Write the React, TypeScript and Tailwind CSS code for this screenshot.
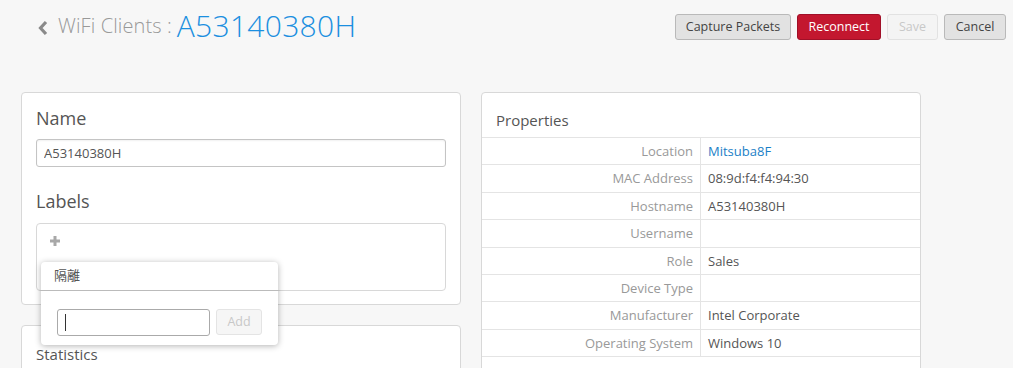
import { useState } from 'react'

const rows: { label: string; value: string; link?: boolean }[] = [
  { label: 'Location', value: 'Mitsuba8F', link: true },
  { label: 'MAC Address', value: '08:9d:f4:f4:94:30' },
  { label: 'Hostname', value: 'A53140380H' },
  { label: 'Username', value: '' },
  { label: 'Role', value: 'Sales' },
  { label: 'Device Type', value: '' },
  { label: 'Manufacturer', value: 'Intel Corporate' },
  { label: 'Operating System', value: 'Windows 10' },
]

const App = () => {
  const [name, setName] = useState('A53140380H')
  const [label, setLabel] = useState('')

  return (
    <div
      className="bg-[#f7f7f7] text-[#555] overflow-hidden h-[368px]"
      style={{ fontFamily: '"Open Sans", "Noto Sans CJK JP", sans-serif' }}
    >
      {/* header */}
      <div className="flex items-start justify-between pl-[37px] pr-[7px] pt-[8px] h-[92px]">
        <div className="flex items-center h-[36px]">
          <svg width="12" height="16" viewBox="0 0 12 16" className="mr-[9px] mt-[3px]">
            <path d="M9 2 L3.5 8 L9 14" fill="none" stroke="#8a8a8a" strokeWidth="3.2" />
          </svg>
          <span className="text-[20px] font-light text-[#999] tracking-[0.1px]">WiFi Clients :</span>
          <span className="text-[30px] font-light text-[#1b8fe0] ml-[5px] leading-none tracking-[0.3px]">A53140380H</span>
        </div>
        <div className="flex gap-[6px] mt-[6px]">
          <button className="h-[26px] w-[116px] text-[12.5px] rounded-[3px] border border-[#b9b9b9] bg-[#e2e2e2] text-[#444]">
            Capture Packets
          </button>
          <button className="h-[26px] w-[84px] text-[12.5px] rounded-[3px] border border-[#a01028] bg-[#c3172f] text-white">
            Reconnect
          </button>
          <button className="h-[26px] w-[51px] text-[12.5px] rounded-[3px] border border-[#e2e2e2] bg-[#f4f4f4] text-[#c8c8c8]">
            Save
          </button>
          <button className="h-[26px] w-[62px] text-[12.5px] rounded-[3px] border border-[#b9b9b9] bg-[#e2e2e2] text-[#444]">
            Cancel
          </button>
        </div>
      </div>

      {/* body */}
      <div className="flex gap-[20px] pl-[21px]">
        <div className="w-[440px] flex flex-col gap-[20px]">
          <div className="relative bg-white border border-[#d8d8d8] rounded-[4px] px-[14px] pt-[13px] pb-[13px]">
            <h2 className="text-[18px] leading-[24px] text-[#555]">Name</h2>
            <input
              value={name}
              onChange={(e) => setName(e.target.value)}
              className="mt-[9px] w-full h-[28px] border border-[#c4c4c4] rounded-[3px] px-[7px] text-[13px] text-[#555] outline-none shadow-[inset_0_1px_2px_rgba(0,0,0,0.06)]"
            />
            <h2 className="text-[18px] leading-[24px] text-[#555] mt-[22px]">Labels</h2>
            <div className="mt-[10px] h-[68px] border border-[#d8d8d8] rounded-[4px] pl-[13px] pt-[12px]">
              <svg width="10" height="10" viewBox="0 0 10 10">
                <path d="M5 0 V10 M0 5 H10" stroke="#a8a8a8" strokeWidth="3" />
              </svg>
            </div>
            {/* label popup */}
            <div className="absolute left-[19px] top-[169px] z-10 w-[237px] bg-white rounded-[4px] shadow-[0_1px_6px_rgba(0,0,0,0.3)]">
              <div className="h-[29px] border-b border-[#bbb] pl-[13px] pt-[4px] text-[13px] text-[#555]">隔離</div>
              <div className="flex gap-[6px] pl-[16px] pt-[18px] pb-[9px]">
                <div className="relative">
                  <input
                    value={label}
                    onChange={(e) => setLabel(e.target.value)}
                    className="w-[153px] h-[27px] border border-[#aaa] rounded-[3px] px-[7px] text-[13px] outline-none"
                  />
                  <span className="absolute left-[8px] top-[5px] w-px h-[17px] bg-[#333]" />
                </div>
                <button className="w-[46px] h-[26px] border border-[#e4e4e4] bg-[#f6f6f6] rounded-[3px] text-[12.5px] text-[#c8c8c8]">
                  Add
                </button>
              </div>
            </div>
          </div>
          <div className="bg-white border border-[#d8d8d8] rounded-[4px] px-[14px] pt-[17px] h-[80px]">
            <h3 className="text-[15px] text-[#555]">Statistics</h3>
          </div>
        </div>

        <div className="w-[440px] bg-white border border-[#d8d8d8] rounded-[4px] self-start">
          <div className="h-[44px] px-[14px] pt-[17px] text-[15px] leading-[20px] text-[#555]">Properties</div>
          <div className="border-t border-[#e4e4e4]">
            {rows.map((r) => (
              <div key={r.label} className="flex h-[27.4px] border-b border-[#e4e4e4] text-[13px] leading-[26px]">
                <div className="w-[219px] border-r border-[#e4e4e4] text-right pr-[7px] text-[#999]">{r.label}</div>
                <div className={`pl-[7px] ${r.link ? 'text-[#1b7fc7]' : 'text-[#555]'}`}>{r.value}</div>
              </div>
            ))}
            <div className="h-[20px]" />
          </div>
        </div>
      </div>
    </div>
  )
}

export default App
